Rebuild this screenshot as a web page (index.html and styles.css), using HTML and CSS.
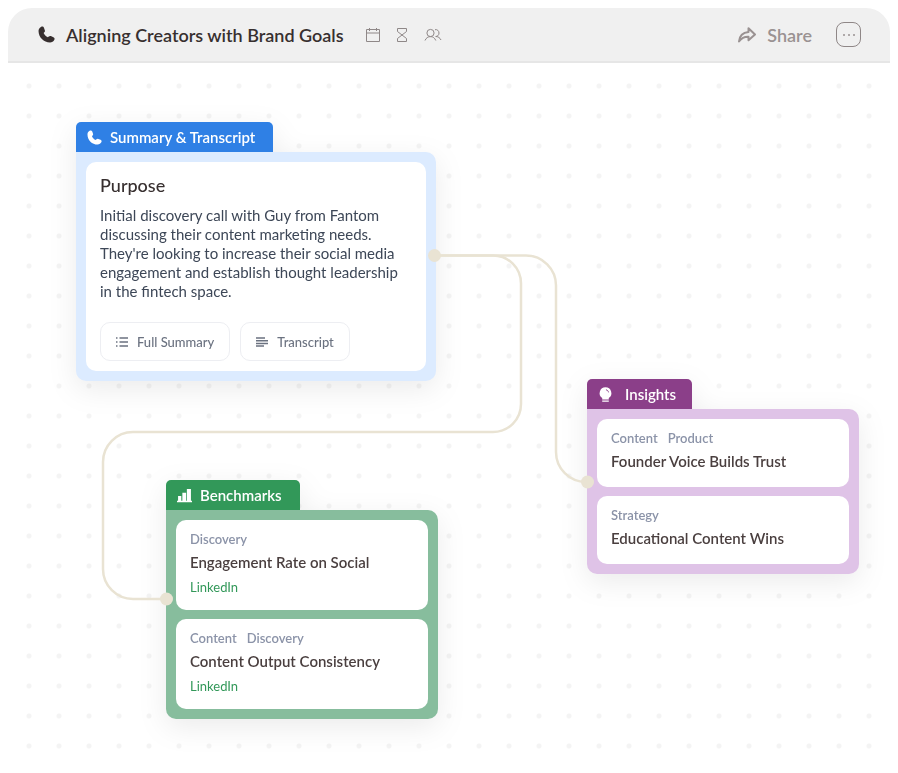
FILE: index.html
```html
<!DOCTYPE html>
<html lang="en">
<head>
    <meta charset="utf-8">
    <meta name="viewport" content="width=device-width, initial-scale=1.0">
    <title>Aligning Creators with Brand Goals</title>
    <link rel="stylesheet" href="styles.css">
</head>
<body>
    <svg class="sprite" aria-hidden="true">
        <symbol id="phone" viewBox="0 0 16 16">
            <path d="M2.800.9C3.900.2 5.200.6 5.600 1.700L6.400 3.900C6.700 4.700 6.500 5.400 5.900 5.900L5.300 6.600C6 8.400 7.500 9.900 9.300 10.700L10.100 9.900C10.700 9.400 11.400 9.200 12.100 9.500L14.500 10.500C15.500 10.900 15.900 12 15.400 12.900C14.600 14.600 13.100 15.500 11.300 15.500C5.400 15.500.5 10.600.5 4.700C.5 3.100 1.300 1.700 2.800.9Z" fill="currentColor"/>
        </symbol>
    </svg>

    <header class="topbar">
        <svg class="phone-icon" aria-hidden="true"><use href="#phone"/></svg>
        <h1>Aligning Creators with Brand Goals</h1>
        <div class="meta">
            <svg width="14" height="16" viewBox="0 0 14 16">
                <path d="M.5 2.500h13v12H.5zM.5 6h13M3.500 1v3M10.500 1v3"/>
            </svg>
            <svg width="12" height="16" viewBox="0 0 12 16">
                <path d="M1.500 1.500h9v3L6 8 1.500 4.500zM1.500 14.500h9v-3L6 8l-4.500 3.500z"/>
            </svg>
            <svg width="18" height="14" viewBox="0 0 18 14">
                <circle cx="6.500" cy="5" r="3.600"/>
                <path d="M1 12.500C2 10 4 8.600 6.500 8.600s4.200 1.400 5.300 3.900M11 1.700c2.200-.6 4 1.200 4 3.300 0 2-1.300 3.500-3.300 3.500 2.500 0 4.200 1.300 5.300 3.500"/>
            </svg>
        </div>
        <div class="actions">
            <button class="share">
                <svg width="18" height="16" viewBox="0 0 18 16">
                    <path d="M10.500 1.200 17 7.500l-6.500 5.800V9.800C6 9.600 3.500 11 1 14.500 1.500 9 5 5.500 10.500 5z"/>
                </svg>
                Share
            </button>
            <button class="more" aria-label="More options">
                <svg width="14" height="4" viewBox="0 0 14 4">
                    <circle cx="2" cy="2" r="1"/>
                    <circle cx="7" cy="2" r="1"/>
                    <circle cx="12" cy="2" r="1"/>
                </svg>
            </button>
        </div>
    </header>

    <main class="canvas">
        <section class="node summary">
            <h2 class="tab">
                <svg class="tab-icon" aria-hidden="true"><use href="#phone"/></svg>
                Summary &amp; Transcript
            </h2>
            <div class="panel">
                <div class="card">
                    <h3>Purpose</h3>
                    <p>Initial discovery call with Guy from Fantom<br>discussing their content marketing needs.<br>They're looking to increase their social media<br>engagement and establish thought leadership<br>in the fintech space.</p>
                    <div class="buttons">
                        <button>
                            <svg width="12" height="10" viewBox="0 0 12 10">
                                <path d="M0 1h1.500M3.500 1H12M0 5h1.500M3.500 5H12M0 9h1.500M3.500 9H12"/>
                            </svg>
                            Full Summary
                        </button>
                        <button>
                            <svg width="12" height="10" viewBox="0 0 12 10">
                                <path d="M0 1h9M0 3.700h12M0 6.400h12M0 9h8"/>
                            </svg>
                            Transcript
                        </button>
                    </div>
                </div>
            </div>
        </section>

        <section class="node benchmarks">
            <h2 class="tab">
                <svg class="tab-icon" viewBox="0 0 14 14" aria-hidden="true">
                    <path d="M1 7.500h3V12h1V4.500h3.500V12h.7V1H13v11h1v1.300H0V12h1z" fill="currentColor"/>
                </svg>
                Benchmarks
            </h2>
            <div class="panel">
                <article class="card">
                    <div class="tags"><span>Discovery</span></div>
                    <h3>Engagement Rate on Social</h3>
                    <a href="#">LinkedIn</a>
                </article>
                <article class="card">
                    <div class="tags"><span>Content</span><span>Discovery</span></div>
                    <h3>Content Output Consistency</h3>
                    <a href="#">LinkedIn</a>
                </article>
            </div>
        </section>

        <section class="node insights">
            <h2 class="tab">
                <svg class="tab-icon" viewBox="0 0 14 16" aria-hidden="true">
                    <path d="M7 .3a6.300 6.300 0 0 1 3.500 11.500V13.300h-7v-1.500A6.300 6.300 0 0 1 7 .3zM3.500 14.300h7v1.400h-7z" fill="currentColor"/>
                    <path d="M7.500 3c1.500.2 2.500 1.200 2.700 2.700" fill="none" stroke="#8b3f89"/>
                </svg>
                Insights
            </h2>
            <div class="panel">
                <article class="card">
                    <div class="tags"><span>Content</span><span>Product</span></div>
                    <h3>Founder Voice Builds Trust</h3>
                </article>
                <article class="card">
                    <div class="tags"><span>Strategy</span></div>
                    <h3>Educational Content Wins</h3>
                </article>
            </div>
        </section>

        <!-- connectors between the nodes -->
        <svg class="links" width="883" height="702" viewBox="0 0 883 702" aria-hidden="true">
            <path d="M427 192.500H485a28 28 0 0 1 28 28V341a28 28 0 0 1-28 28H125a30 30 0 0 0-30 30V506a30 30 0 0 0 30 30H159"/>
            <path d="M427 192.500H518a30 30 0 0 1 30 30V389a30 30 0 0 0 30 30"/>
            <circle cx="426.500" cy="192.500" r="6.500"/>
            <circle cx="158.500" cy="536" r="6.500"/>
            <circle cx="579.500" cy="419" r="6.500"/>
        </svg>
    </main>
</body>
</html>
```

FILE: styles.css
```css
* {
    box-sizing: border-box;
}
body {
    margin: 8px;
    font-family: Lato, "Liberation Sans", sans-serif;
    background: #fff;
    color: #372f2f;
}
h1, h2, h3, p {
    margin: 0;
}
button {
    font-family: inherit;
    background: none;
    border: none;
    padding: 0;
    cursor: pointer;
}
svg {
    flex: none;
}
.sprite {
    display: none;
}
.topbar {
    display: flex;
    align-items: center;
    height: 55px;
    padding: 0 29px 0 30px;
    background: #f0f0f0;
    border-bottom: 2px solid #e6e6e6;
    border-radius: 24px 24px 0 0;
}
.phone-icon {
    width: 17px;
    height: 17px;
    margin-right: 11px;
}
h1 {
    font-size: 18px;
    line-height: 24px;
    font-weight: 600;
}
.meta {
    display: flex;
    align-items: center;
    gap: 16px;
    margin-left: 22px;
    fill: none;
    stroke: #8f8888;
}
.actions {
    display: flex;
    align-items: center;
    gap: 24px;
    margin-left: auto;
}
.share {
    display: flex;
    align-items: center;
    gap: 11px;
    font-size: 18px;
    font-weight: 600;
    color: #9a9292;
}
.share svg {
    fill: none;
    stroke: currentColor;
    stroke-width: 2;
    stroke-linejoin: round;
}
.more {
    display: flex;
    align-items: center;
    justify-content: center;
    width: 25px;
    height: 25px;
    border: 1px solid #8f8787;
    border-radius: 8px;
    fill: #9a9292;
}
.canvas {
    position: relative;
    min-height: 702px;
    background: radial-gradient(circle, #f4f4f4 2px, transparent 3px) 6px 8px / 30px 30px;
}
.node {
    position: absolute;
    filter: drop-shadow(0 8px 14px rgba(0, 0, 0, 0.08));
}
.summary {
    left: 68px;
    top: 59px;
    width: 360px;
}
.benchmarks {
    left: 158px;
    top: 417px;
    width: 272px;
}
.insights {
    left: 579px;
    top: 316px;
    width: 272px;
}
.tab {
    display: flex;
    align-items: center;
    gap: 8px;
    width: max-content;
    height: 30px;
    padding: 0 18px 0 11px;
    border-radius: 5px 5px 0 0;
    font-size: 15px;
    line-height: 20px;
    font-weight: 600;
    color: #fff;
}
.tab-icon {
    width: 15px;
    height: 15px;
}
.summary .tab {
    background: #2f80e5;
}
.benchmarks .tab {
    background: #329859;
}
.insights .tab {
    gap: 12px;
    padding-right: 16px;
    background: #8b3f89;
}
.panel {
    display: flex;
    flex-direction: column;
    gap: 9px;
    padding: 10px;
    border-radius: 0 10px 10px 10px;
}
.summary .panel {
    background: #dcebff;
}
.benchmarks .panel {
    background: #87bd9d;
}
.insights .panel {
    background: #dfc3e7;
}
.card {
    padding: 11px 14px 14px;
    border-radius: 10px;
    background: #fff;
}
.card h3 {
    font-size: 15px;
    line-height: 20px;
    font-weight: 600;
    color: #4a3f3f;
}
.card a {
    display: block;
    margin-top: 6px;
    font-size: 13px;
    line-height: 18px;
    color: #329859;
    text-decoration: none;
}
.tags {
    display: flex;
    gap: 10px;
    margin-bottom: 5px;
    font-size: 13px;
    line-height: 16px;
    font-weight: 600;
    color: #8b93a8;
}
.insights .card {
    padding-bottom: 16px;
}
.summary .card {
    padding: 13px 14px 10px;
}
.summary .card h3 {
    font-size: 18px;
    font-weight: 500;
    color: #372f2f;
}
.summary p {
    margin-top: 11px;
    font-size: 15px;
    line-height: 19px;
    color: #3d4757;
}
.buttons {
    display: flex;
    gap: 10px;
    margin-top: 21px;
}
.buttons button {
    display: flex;
    align-items: center;
    gap: 9px;
    height: 39px;
    padding: 0 15px;
    border: 1px solid #edeef2;
    border-radius: 10px;
    font-size: 13px;
    font-weight: 500;
    color: #6b7280;
}
.buttons svg {
    stroke: currentColor;
    stroke-width: 1.5;
}
.links {
    position: absolute;
    left: 0;
    top: 0;
    fill: none;
    stroke: #e9e3d3;
    stroke-width: 2.5;
    pointer-events: none;
}
.links circle {
    fill: #e9e3d3;
    stroke: none;
}
```
